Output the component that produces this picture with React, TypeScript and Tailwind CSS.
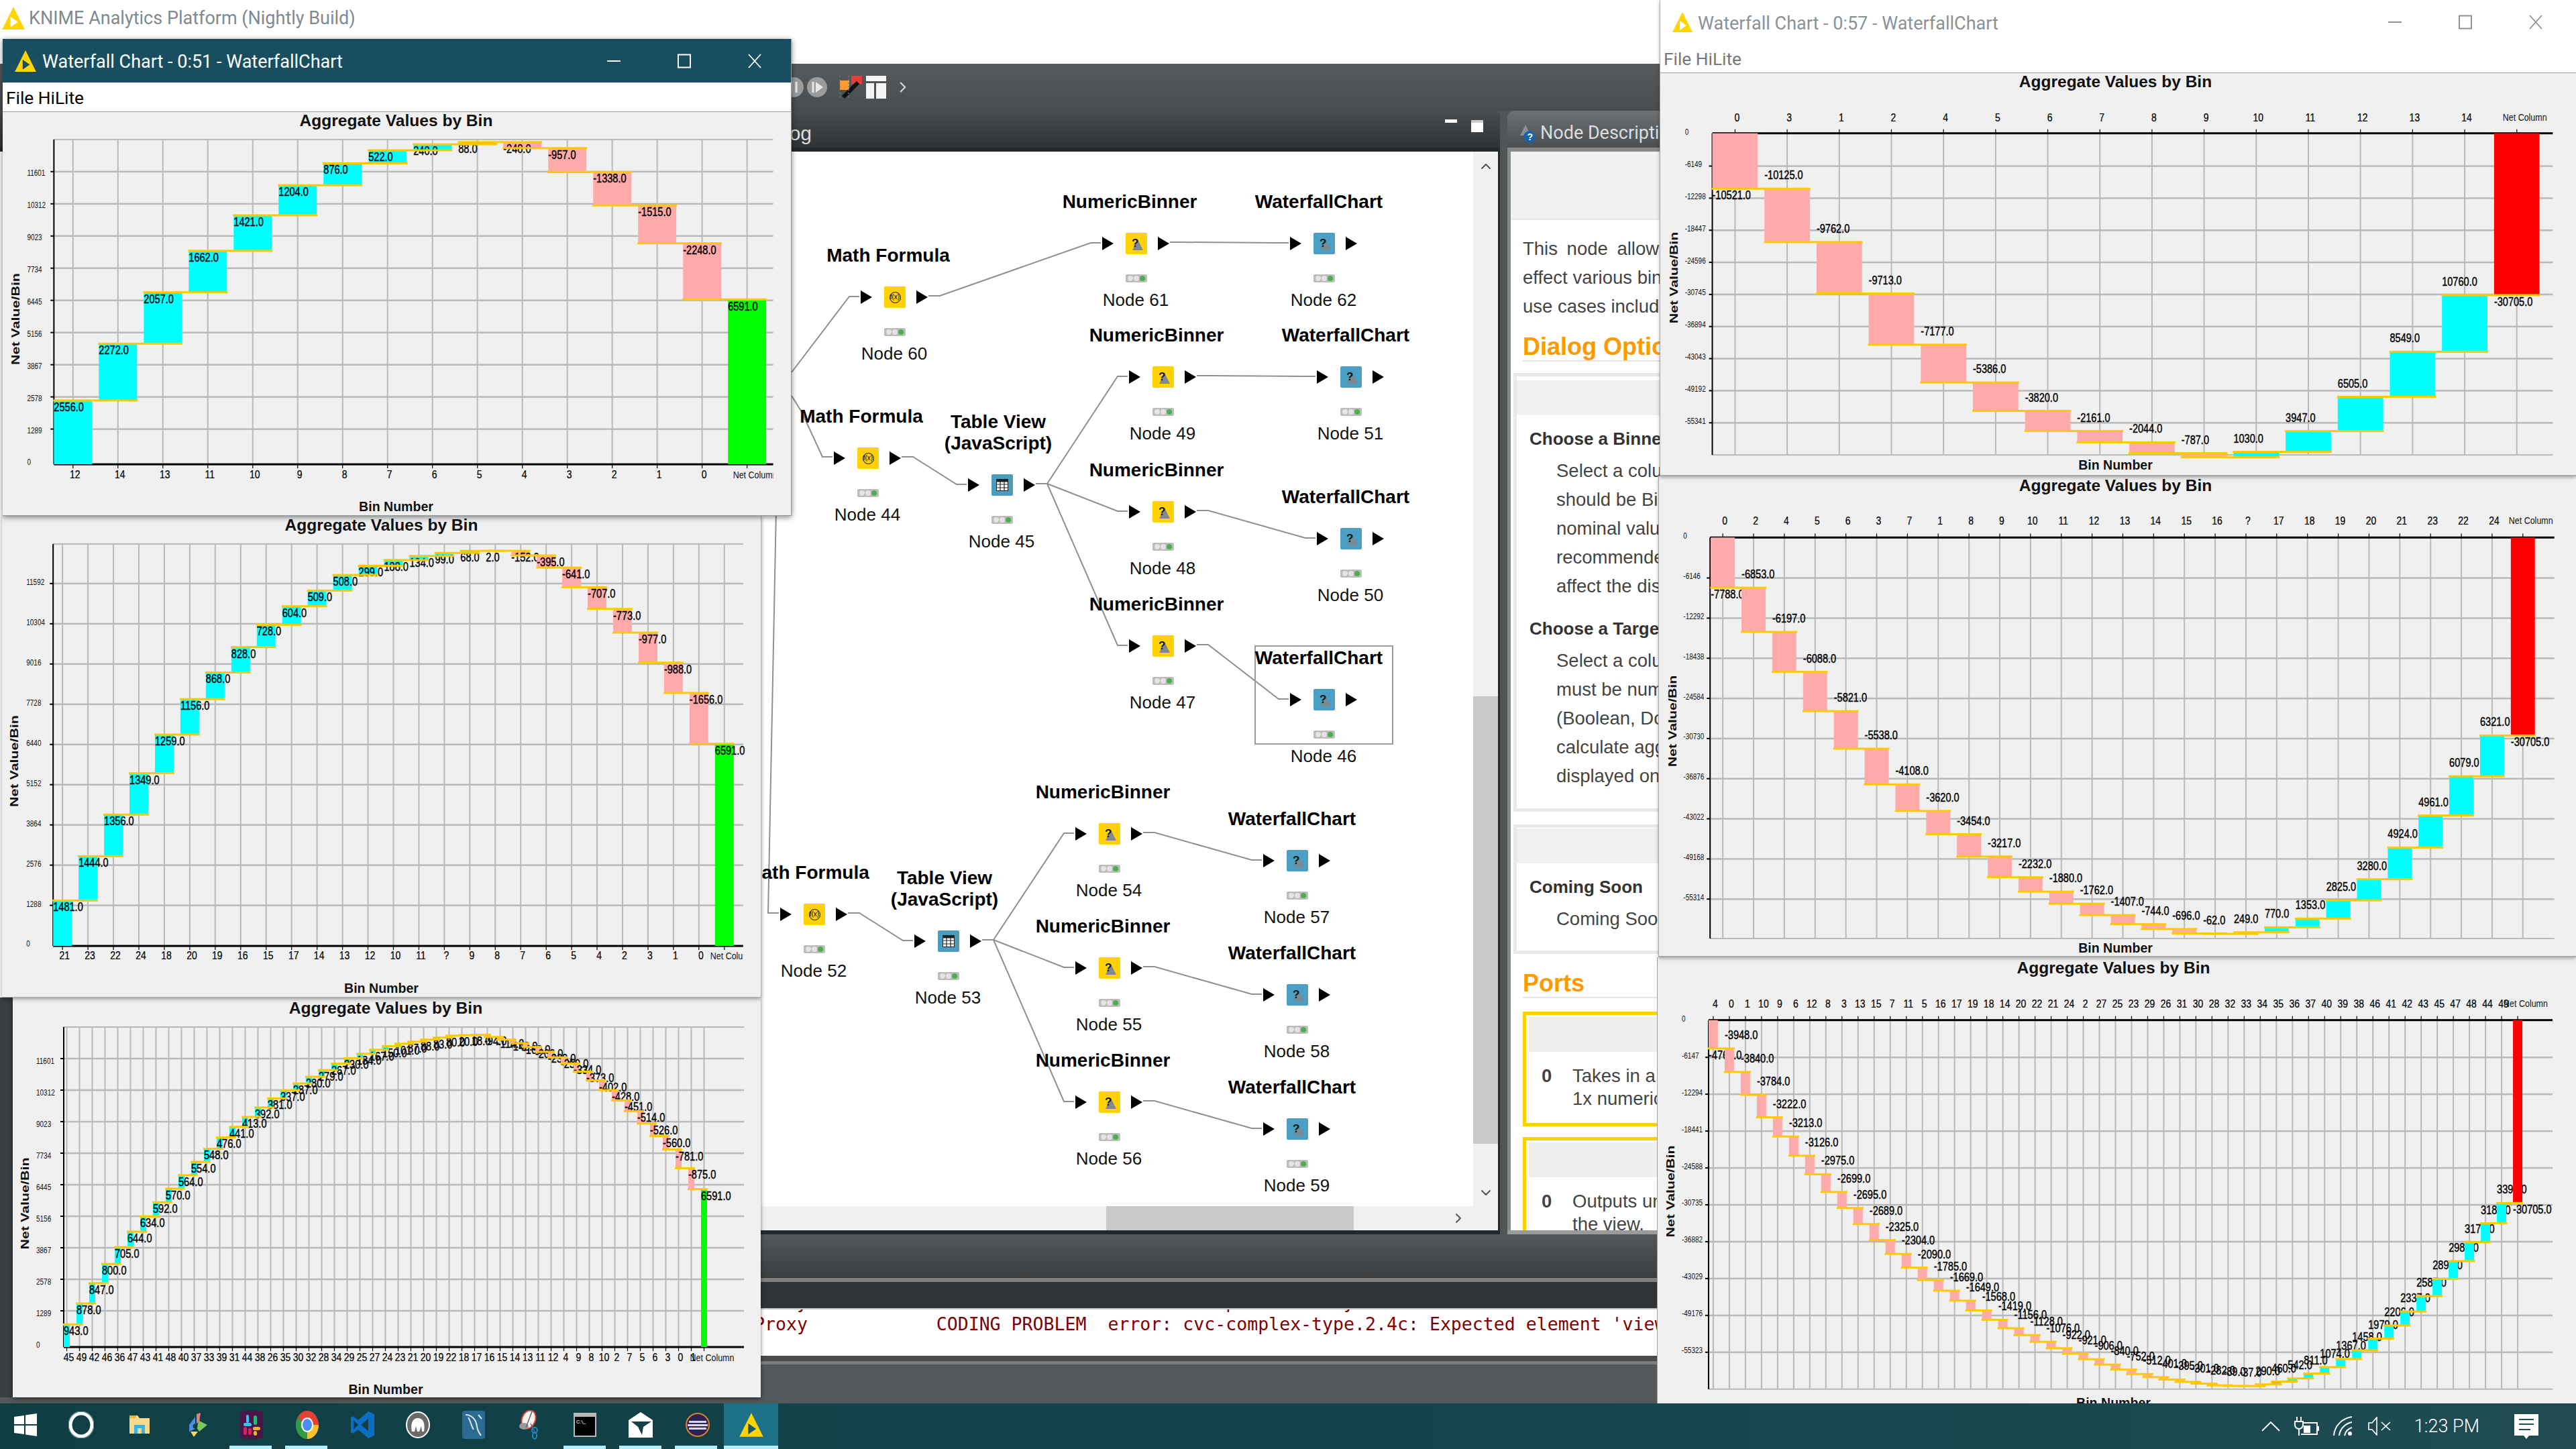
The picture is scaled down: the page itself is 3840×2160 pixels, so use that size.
import React from "react";
import { ChevronUp, ChevronDown, ChevronRight } from "lucide-react";

const sans = "[font-family:'Liberation_Sans',Arial,sans-serif]";

type ChartCfg = {
  id: string;
  vb: [number, number, number, number];
  names: string[];
  vals: number[];
  net: number;
  x0: number;
  step: number;
  barW: number;
  base: number;
  scale: number;
  plotL: number;
  plotR: number;
  plotT: number;
  plotB: number;
  ticks: number[];
  tickText: string[];
  tickX: number;
  tickDy: number;
  zeroY: number;
  xLabelY: number;
  titleX: number;
  titleY: number;
  binY: number;
  axisX: number;
  axisY: number;
  inverted?: boolean;
};

const range = (a: number, s: number, n: number) => Array.from({ length: n }, (_, i) => a + s * i);

const grid = "#b9b9b9";

function Chart({ c }: { c: ChartCfg }) {
  let total = 0;
  const cols = c.vals.map((v, i) => {
    const from = total;
    total += v;
    const y0 = c.base - from * c.scale;
    const y1 = c.base - total * c.scale;
    return { i, v, y0, y1, top: Math.min(y0, y1), h: Math.abs(y1 - y0), x: c.x0 + i * c.step };
  });
  const n = c.vals.length;
  const netX = c.x0 + n * c.step;
  const netY = c.base - c.net * c.scale;
  const centers = range(c.x0 + c.barW / 2, c.step, n + 1);
  const fmt = (v: number) => v.toFixed(1);
  return (
    <svg className="block w-full h-full" viewBox={c.vb.join(" ")}>
      <defs>
        <clipPath id={c.id}>
          <rect x={c.vb[0]} y={c.vb[1]} width={c.plotR - c.vb[0]} height={c.vb[3]} />
        </clipPath>
      </defs>
      <text x={c.titleX} y={c.titleY + 8} textAnchor="middle" fontSize="24.6" fontWeight="700" fill="#111">
        Aggregate Values by Bin
      </text>
      <text x={c.titleX} y={c.binY + 7} textAnchor="middle" fontSize="19.6" fontWeight="700" fill="#111">
        Bin Number
      </text>
      <text
        transform={`translate(${c.axisX + 6},${c.axisY}) scale(1,1.3) rotate(-90)`}
        textAnchor="middle"
        fontSize="16.5"
        fontWeight="700"
        fill="#111"
      >
        Net Value/Bin
      </text>
      {c.ticks.map((y) => (
        <rect key={y} x={c.plotL} y={y - 1.2} width={c.plotR - c.plotL} height="2.5" fill={grid} />
      ))}
      <rect x={c.plotL} y={(c.inverted ? c.plotB : c.plotT) - 1} width={c.plotR - c.plotL} height="2" fill={grid} />
      {centers.map((x) => (
        <rect key={x} x={x - 1} y={c.plotT} width="2" height={c.plotB - c.plotT} fill={grid} />
      ))}
      <rect x={c.plotL - 1} y={c.plotT} width="2" height={c.plotB - c.plotT} fill="#000" />
      <rect x={c.plotL} y={c.base - 1.5} width={c.plotR - c.plotL} height="3" fill="#000" />
      {centers.map((x) => (
        <rect key={x} x={x - 0.6} y={c.inverted ? c.base - 6 : c.base} width="1.2" height="6" fill="#000" />
      ))}
      {c.ticks.map((y) => (
        <rect key={y} x={c.plotL - 5} y={y - 1} width="5" height="2" fill="#000" />
      ))}
      {c.tickText.map((t, i) => (
        <text
          key={t}
          transform={`translate(${c.tickX},${c.ticks[i] + c.tickDy + 4.5}) scale(1,1.2)`}
          fontSize="10"
          fill="#111"
        >
          {t}
        </text>
      ))}
      <text transform={`translate(${c.tickX},${c.zeroY + 4.5}) scale(1,1.2)`} fontSize="10" fill="#111">
        0
      </text>
      <g clipPath={`url(#${c.id})`}>
        {c.names.map((t, i) => (
          <text
            key={i}
            transform={`translate(${centers[i] + 3},${c.xLabelY + 6}) scale(1,1.2)`}
            textAnchor="middle"
            fontSize="14"
            fill="#000"
            stroke="#000"
            strokeWidth="0.2"
          >
            {t}
          </text>
        ))}
        <text transform={`translate(${centers[n] - 21},${c.xLabelY + 5.5}) scale(1,1.2)`} fontSize="12.5" fill="#111">
          Net Column
        </text>
      </g>
      {cols.map((b) => {
        const labelY = c.inverted ? (b.i === 0 ? b.top + b.h + 10 : b.top - 20) : b.top + 10;
        return (
          <g key={b.i}>
            <rect x={b.x} y={b.top} width={c.barW} height={b.h} fill={b.v > 0 ? "#00ffff" : "#ffaaaa"} />
            <text
              transform={`translate(${b.x},${labelY + 6}) scale(1,1.2)`}
              fontSize="14.6"
              fill="#000"
              stroke="#000"
              strokeWidth="0.35"
            >
              {fmt(b.v)}
            </text>
          </g>
        );
      })}
      <rect
        x={netX}
        y={Math.min(netY, c.base)}
        width={c.barW}
        height={Math.abs(netY - c.base)}
        fill={c.net > 0 ? "#00ff00" : "#ff0000"}
      />
      <text
        transform={`translate(${netX},${netY + 16}) scale(1,1.2)`}
        fontSize="14.6"
        fill="#000"
        stroke="#000"
        strokeWidth="0.35"
      >
        {fmt(c.net)}
      </text>
      {cols.map((b) => (
        <rect key={b.i} x={b.x - 1} y={b.y1 - 1.5} width={c.step + c.barW + 2} height="3" fill="#ffc800" />
      ))}
    </svg>
  );
}

const lt = ["11601", "10312", "9023", "7734", "6445", "5156", "3867", "2578", "1289"];

const c1: ChartCfg = {
  id: "c1",
  vb: [4, 167, 1176, 602],
  names: ["12", "14", "13", "11", "10", "9", "8", "7", "6", "5", "4", "3", "2", "1", "0"],
  vals: [2556, 2272, 2057, 1662, 1421, 1204, 876, 522, 240, 88, -240, -957, -1338, -1515, -2248],
  net: 6591,
  x0: 80,
  step: 67.1,
  barW: 57,
  base: 693,
  scale: 0.0373,
  plotL: 80,
  plotR: 1154,
  plotT: 208,
  plotB: 693,
  ticks: range(256, 48.05, 9),
  tickText: lt,
  tickX: 40,
  tickDy: 2,
  zeroY: 689,
  xLabelY: 708,
  titleX: 591,
  titleY: 180,
  binY: 756,
  axisX: 23,
  axisY: 476,
};

const c2: ChartCfg = {
  id: "c2",
  vb: [3, 769, 1132, 718],
  names: "21 23 22 24 18 20 19 16 15 17 14 13 12 10 11 ? 9 8 7 6 5 4 2 3 1 0".split(" "),
  vals: [1481, 1444, 1356, 1349, 1259, 1156, 868, 828, 728, 604, 509, 508, 299, 188, 134, 99, 68, 2, -152, -395, -641, -707, -773, -977, -988, -1656],
  net: 6591,
  x0: 79,
  step: 38,
  barW: 28,
  base: 1411,
  scale: 0.0458,
  plotL: 79,
  plotR: 1109,
  plotT: 811,
  plotB: 1411,
  ticks: range(870, 60.05, 9),
  tickText: ["11592", "10304", "9016", "7728", "6440", "5152", "3864", "2576", "1288"],
  tickX: 39,
  tickDy: -2,
  zeroY: 1407,
  xLabelY: 1425,
  titleX: 569,
  titleY: 783,
  binY: 1474,
  axisX: 21,
  axisY: 1135,
};

const c3: ChartCfg = {
  id: "c3",
  vb: [19, 1487, 1115, 596],
  names: "45 49 42 46 36 47 43 41 48 40 37 33 39 31 44 38 26 35 30 32 28 34 29 25 27 24 23 21 20 19 22 18 17 16 15 14 13 11 12 4 9 8 10 2 7 5 6 3 0 1".split(" "),
  vals: [943, 878, 847, 800, 705, 644, 634, 592, 570, 564, 554, 548, 476, 441, 413, 392, 381, 337, 287, 280, 279, 267, 230, 184, 167, 150, 101, 87, 88, 83, 80, 20, 18, -94, -114, -142, -160, -206, -230, -259, -334, -373, -402, -428, -451, -514, -526, -560, -781, -875],
  net: 6591,
  x0: 95,
  step: 19,
  barW: 9,
  base: 2008,
  scale: 0.0357,
  plotL: 95,
  plotR: 1109,
  plotT: 1531,
  plotB: 2008,
  ticks: range(1578, 47, 9),
  tickText: lt,
  tickX: 54,
  tickDy: 3,
  zeroY: 2004,
  xLabelY: 2023,
  titleX: 575,
  titleY: 1503,
  binY: 2071,
  axisX: 37,
  axisY: 1794,
};

const r1: ChartCfg = {
  id: "r1",
  vb: [2474, 109, 1366, 601],
  names: "0 3 1 2 4 5 6 7 8 9 10 11 12 13 14".split(" "),
  vals: [-10521, -10125, -9762, -9713, -7177, -5386, -3820, -2161, -2044, -787, 1030, 3947, 6505, 8549, 10760],
  net: -30705,
  x0: 2550,
  step: 77.95,
  barW: 68,
  base: 199,
  scale: 0.00788,
  plotL: 2550,
  plotR: 3807,
  plotT: 199,
  plotB: 680,
  ticks: range(248, 48, 9),
  tickText: ["-6149", "-12298", "-18447", "-24596", "-30745", "-36894", "-43043", "-49192", "-55341"],
  tickX: 2509,
  tickDy: -3,
  zeroY: 197,
  xLabelY: 175,
  titleX: 3153,
  titleY: 122,
  binY: 695,
  axisX: 2492,
  axisY: 415,
  inverted: true,
};

const r2: ChartCfg = {
  id: "r2",
  vb: [2472, 710, 1368, 717],
  names: "0 2 4 5 6 3 7 1 8 9 10 11 12 13 14 15 16 ? 17 18 19 20 21 23 22 24".split(" "),
  vals: [-7788, -6853, -6197, -6088, -5821, -5538, -4108, -3620, -3454, -3217, -2232, -1880, -1762, -1407, -744, -696, -62, 249, 770, 1353, 2825, 3280, 4924, 4961, 6079, 6321],
  net: -30705,
  x0: 2548,
  step: 46,
  barW: 36,
  base: 801.5,
  scale: 0.00964,
  plotL: 2547,
  plotR: 3809,
  plotT: 801.5,
  plotB: 1401,
  ticks: range(862, 60, 9),
  tickText: ["-6146", "-12292", "-18438", "-24584", "-30730", "-36876", "-43022", "-49168", "-55314"],
  tickX: 2507,
  tickDy: -3,
  zeroY: 798.5,
  xLabelY: 776,
  titleX: 3153,
  titleY: 724,
  binY: 1415,
  axisX: 2491,
  axisY: 1076,
  inverted: true,
};

const r3: ChartCfg = {
  id: "r3",
  vb: [2470, 1427, 1370, 665],
  names: "4 0 1 10 9 6 12 8 3 13 15 7 11 5 16 17 19 18 14 20 22 21 24 2 27 25 23 29 26 31 30 28 32 33 34 35 36 37 40 39 38 46 41 42 43 45 47 48 44 49".split(" "),
  vals: [-4761, -3948, -3840, -3784, -3222, -3213, -3126, -2975, -2699, -2695, -2689, -2325, -2304, -2090, -1785, -1669, -1649, -1568, -1419, -1156, -1128, -1076, -922, -921, -906, -840, -752, -512, -401, -395, -301, -282, -89, -37, 290, 460, 542, 811, 1074, 1367, 1458, 1979, 2206, 2337, 2587, 2893, 2987, 3175, 3186, 3397],
  net: -30705,
  x0: 2546,
  step: 24,
  barW: 14,
  base: 1520.5,
  scale: 0.00888,
  plotL: 2546,
  plotR: 3805,
  plotT: 1520.5,
  plotB: 2071,
  ticks: range(1576, 55, 9),
  tickText: ["-6147", "-12294", "-18441", "-24588", "-30735", "-36882", "-43029", "-49176", "-55323"],
  tickX: 2506,
  tickDy: -3,
  zeroY: 1518,
  xLabelY: 1495.5,
  titleX: 3150,
  titleY: 1443,
  binY: 2091,
  axisX: 2489,
  axisY: 1776,
  inverted: true,
};

function KnimeLogo({ size, inner }: { size: number; inner: string }) {
  return (
    <svg width={size} height={size} viewBox="0 0 32 30">
      <polygon points="16,0 31,30 1,30" fill="#ffd500" />
      <polygon points="12,13 22,20 12,27" fill={inner} />
    </svg>
  );
}

function WinButtons({ stroke }: { stroke: string }) {
  return (
    <div className="ml-auto flex items-center">
      <div className="w-[105px] flex justify-center">
        <svg width="22" height="22" viewBox="0 0 22 22">
          <path d="M1 11H21" stroke={stroke} strokeWidth="2" />
        </svg>
      </div>
      <div className="w-[105px] flex justify-center">
        <svg width="22" height="22" viewBox="0 0 22 22">
          <rect x="2" y="1.5" width="18" height="19" fill="none" stroke={stroke} strokeWidth="2" />
        </svg>
      </div>
      <div className="w-[105px] flex justify-center">
        <svg width="22" height="22" viewBox="0 0 22 22">
          <path d="M2 1L20 21M20 1L2 21" stroke={stroke} strokeWidth="1.8" />
        </svg>
      </div>
    </div>
  );
}

function Tri() {
  return (
    <svg width="17" height="20" viewBox="0 0 17 20" className="block">
      <polygon points="0,0 17,10 0,20" fill="#000" />
    </svg>
  );
}

function NodeIcon({ kind }: { kind: string }) {
  if (kind === "m")
    return (
      <div className="w-8 h-8 bg-[#ffd200] rounded-[2px] flex items-center justify-center">
        <div className="w-[17px] h-[17px] rounded-full border border-black flex items-center justify-center text-[10px] leading-none text-black">
          f(x)
        </div>
      </div>
    );
  if (kind === "t")
    return (
      <div className="w-8 h-8 bg-[#4a9cbd] rounded-[2px] flex items-center justify-center">
        <svg width="18" height="18" viewBox="0 0 18 18">
          <rect x="0.5" y="0.5" width="17" height="17" fill="#fff" stroke="#222" />
          <rect x="0.5" y="0.5" width="17" height="4" fill="#222" />
          <path d="M6 1V18M12 1V18M0 8H18M0 13H18" stroke="#222" strokeWidth="1.2" />
        </svg>
      </div>
    );
  return (
    <div className={"w-8 h-8 rounded-[2px] " + (kind === "y" ? "bg-[#ffd200]" : "bg-[#4a9fc2]")}>
      <svg width="32" height="32" viewBox="0 0 32 32">
        <polygon points="18,10 26,26 10,26" fill="#7c8a93" />
        <text x="9" y="21" fontSize="17" fontWeight="700" fill="#111">
          ?
        </text>
      </svg>
    </div>
  );
}

type WNode = { n: number; x: number; y: number; label: string[]; kind: string };

const nodes: WNode[] = [
  { n: 60, x: 1318, y: 427, label: ["Math Formula"], kind: "m" },
  { n: 61, x: 1678, y: 347, label: ["NumericBinner"], kind: "y" },
  { n: 62, x: 1958, y: 347, label: ["WaterfallChart"], kind: "b" },
  { n: 44, x: 1278, y: 667, label: ["Math Formula"], kind: "m" },
  { n: 45, x: 1478, y: 707, label: ["Table View", "(JavaScript)"], kind: "t" },
  { n: 49, x: 1718, y: 546, label: ["NumericBinner"], kind: "y" },
  { n: 51, x: 1998, y: 546, label: ["WaterfallChart"], kind: "b" },
  { n: 48, x: 1718, y: 747, label: ["NumericBinner"], kind: "y" },
  { n: 50, x: 1998, y: 787, label: ["WaterfallChart"], kind: "b" },
  { n: 47, x: 1718, y: 947, label: ["NumericBinner"], kind: "y" },
  { n: 46, x: 1958, y: 1027, label: ["WaterfallChart"], kind: "b" },
  { n: 52, x: 1198, y: 1347, label: ["Math Formula"], kind: "m" },
  { n: 53, x: 1398, y: 1387, label: ["Table View", "(JavaScript)"], kind: "t" },
  { n: 54, x: 1638, y: 1227, label: ["NumericBinner"], kind: "y" },
  { n: 57, x: 1918, y: 1267, label: ["WaterfallChart"], kind: "b" },
  { n: 55, x: 1638, y: 1427, label: ["NumericBinner"], kind: "y" },
  { n: 58, x: 1918, y: 1467, label: ["WaterfallChart"], kind: "b" },
  { n: 56, x: 1638, y: 1627, label: ["NumericBinner"], kind: "y" },
  { n: 59, x: 1918, y: 1667, label: ["WaterfallChart"], kind: "b" },
];

const edges: [number, number][] = [
  [60, 61], [61, 62], [44, 45], [45, 49], [45, 48], [45, 47], [49, 51], [48, 50], [47, 46],
  [52, 53], [53, 54], [53, 55], [53, 56], [54, 57], [55, 58], [56, 59],
];

const byId = Object.fromEntries(nodes.map((n) => [n.n, n]));

function FlowNode({ d }: { d: WNode }) {
  const two = d.label.length > 1;
  const shift = d.kind === "m" || d.kind === "y" ? "-translate-x-[10px]" : d.kind === "t" ? "-translate-x-[6px]" : "-translate-x-[8px]";
  return (
    <div
      className="absolute w-[240px] flex flex-col items-center"
      style={{ left: d.x + 16 - 120, top: d.y - (two ? 94 : 62) - 226 }}
    >
      <div className={"whitespace-nowrap text-center text-[28px] leading-[32px] font-bold text-black " + shift}>
        {d.label.map((l) => (
          <div key={l}>{l}</div>
        ))}
      </div>
      <div className="mt-[30px] w-full grid grid-cols-[1fr_32px_1fr] items-center h-8">
        <div className="flex justify-end pr-[18px]">
          <Tri />
        </div>
        <NodeIcon kind={d.kind} />
        <div className="flex justify-start pl-[16px]">
          <Tri />
        </div>
      </div>
      <div className="mt-[30px] w-8 h-3 rounded-[2px] bg-[#bdbdbd] flex items-center justify-around px-[2px]">
        <span className="w-2 h-2 rounded-full bg-[#e4e4e4]" />
        <span className="w-2 h-2 rounded-full bg-[#e4e4e4]" />
        <span className="w-2 h-2 rounded-full bg-[#4caf50]" />
      </div>
      <div className="mt-[10px] -translate-x-[1px] text-[26px] leading-[32px] text-[#111] whitespace-nowrap">
        Node {d.n}
      </div>
    </div>
  );
}

function Canvas() {
  return (
    <div className="relative w-[2196px] h-full bg-white overflow-hidden">
      <svg className="absolute left-0 top-0" width="2196" height="1572" viewBox="0 226 2196 1572">
        {edges.map(([a, b]) => {
          const A = byId[a];
          const B = byId[b];
          const y1 = A.y + 14;
          const y2 = B.y + 15;
          const pts = `${A.x + 66},${y1} ${A.x + 83},${y1} ${B.x - 52},${y2} ${B.x - 37},${y2}`;
          return <polyline key={a + "-" + b} points={pts} fill="none" stroke="#8f8f8f" strokeWidth="2" />;
        })}
        <polyline points="1180,555 1266,442 1281,442" fill="none" stroke="#8f8f8f" strokeWidth="2" />
        <polyline points="1180,590 1195,614 1226,681 1241,681" fill="none" stroke="#8f8f8f" strokeWidth="2" />
        <polyline points="1157,760 1145,1361 1161,1361" fill="none" stroke="#8f8f8f" strokeWidth="2" />
      </svg>
      <div className="absolute left-[1870px] top-[736px] w-[207px] h-[148px] border-2 border-[#9a9a9a]" />
      {nodes.map((d) => (
        <FlowNode key={d.n} d={d} />
      ))}
    </div>
  );
}

function Editor() {
  return (
    <div className="w-[2236px] h-full flex flex-col">
      <div className="h-[55px] bg-linear-to-b from-[#4a4d4f] to-[#303335] rounded-t-[8px] flex items-center pt-[12px] relative">
        <span className="ml-[1160px] text-[30px] text-[#dcdcdc]">Log</span>
        <div className="absolute left-[2154px] top-[13px] w-[18px] h-[5px] bg-white" />
        <div className="absolute left-[2193px] top-[14px] w-[18px] h-[18px] bg-white border-t-[4px] border-[#ccc]" />
      </div>
      <div className="h-[6px] bg-[#26292b]" />
      <div className="flex-1 flex flex-col min-h-0">
        <div className="flex-1 flex min-h-0">
          <Canvas />
          <div className="w-[37px] bg-[#f1f1f1] flex flex-col">
            <div className="h-[812px] flex justify-center pt-[10px]">
              <ChevronUp size={24} color="#555" />
            </div>
            <div className="h-[667px] bg-[#c9c9c9]" />
            <div className="flex-1 flex items-end justify-center pb-[8px]">
              <ChevronDown size={24} color="#555" />
            </div>
          </div>
          <div className="w-[3px] bg-[#26292b]" />
        </div>
        <div className="h-[36px] bg-[#f1f1f1] flex">
          <div className="w-[1649px]" />
          <div className="w-[369px] bg-[#c9c9c9]" />
          <div className="flex-1 flex items-center pl-[144px]">
            <ChevronRight size={24} color="#555" />
          </div>
          <div className="w-[3px] bg-[#26292b]" />
        </div>
      </div>
      <div className="h-[6px] bg-[#26292b]" />
    </div>
  );
}

function Lines({ items }: { items: string[] }) {
  return (
    <div className="mt-[4px] pl-[40px] text-[27.5px] leading-[43px] text-[#444] whitespace-nowrap">
      {items.map((t) => (
        <div key={t}>{t}</div>
      ))}
    </div>
  );
}

function Heading({ children }: { children: React.ReactNode }) {
  return <div className="text-[26px] leading-[43px] font-bold text-[#333] whitespace-nowrap">{children}</div>;
}

function Section({ children, h }: { children: React.ReactNode; h: string }) {
  return (
    <div className={"ml-[4px] border-l-[5px] border-y-[5px] border-[#e9e9e9] overflow-hidden " + h}>
      <div className="h-[52px] bg-[#f0f0f0]" />
      <div className="pl-[19px]">{children}</div>
    </div>
  );
}

function Port({ h, mt, a, b }: { h: string; mt: string; a: string; b: string }) {
  return (
    <div className={"ml-[18px] border-l-[5px] border-y-[5px] border-[#ffd000] pl-[4px] pt-[3px] whitespace-nowrap " + h + " " + mt}>
      <div className="h-[52px] bg-[#efefef]" />
      <div className="mt-[19px] pl-[19px] grid grid-cols-[46px_1fr] text-[27.5px] leading-[34px] text-[#444]">
        <div className="font-bold">0</div>
        <div>
          <div>{a}</div>
          <div>{b}</div>
        </div>
      </div>
    </div>
  );
}

function Description() {
  return (
    <div className="flex-1 h-full flex flex-col min-w-0">
      <div className="h-[55px] bg-linear-to-b from-[#6e7173] to-[#4b4e50] rounded-t-[10px] flex items-center pl-[18px] pt-[12px] gap-[5px]">
        <svg width="26" height="30" viewBox="0 0 26 30">
          <polygon points="9,2 17,18 1,18" fill="#8d9093" />
          <circle cx="15" cy="20" r="9" fill="#1565a8" />
          <text x="11.5" y="25" fontSize="14" fontWeight="700" fill="#fff">
            ?
          </text>
        </svg>
        <span className="text-[27px] text-[#dddddd] whitespace-nowrap [font-family:Roboto,sans-serif]">Node Description</span>
      </div>
      <div className="h-[6px] bg-[#888]" />
      <div className="flex-1 flex min-h-0">
        <div className="w-[5px] bg-[#888]" />
        <div className="flex-1 bg-white overflow-hidden">
          <div className="h-[102px] bg-[#f1f1f1] border-b-2 border-[#e8e8e8]" />
          <div className="pl-[18px] pt-[21px] text-[27.5px] leading-[43px] text-[#444] whitespace-nowrap">
            <div className="[word-spacing:6px]">This node allows</div>
            <div>effect various bins</div>
            <div>use cases include</div>
          </div>
          <div className="ml-[18px] mt-[17px] h-[44px] text-[36px] leading-[44px] font-bold text-[#ff9900] border-b-2 border-[#e5e5e5] whitespace-nowrap">
            Dialog Options
          </div>
          <div className="mt-[17px]">
            <Section h="h-[654px] pt-[6px]">
              <div className="mt-[14px]">
                <Heading>Choose a Binned</Heading>
              </div>
              <Lines items={["Select a column", "should be Binned", "nominal values", "recommended", "affect the display"]} />
              <div className="mt-[21px]">
                <Heading>Choose a Target</Heading>
              </div>
              <Lines items={["Select a colum", "must be numeric", "(Boolean, Double", "calculate aggregate", "displayed on"]} />
            </Section>
          </div>
          <div className="mt-[19px]">
            <Section h="h-[193px] pt-[1px]">
              <div className="mt-[14px]">
                <Heading>Coming Soon</Heading>
              </div>
              <Lines items={["Coming Soon"]} />
            </Section>
          </div>
          <div className="ml-[18px] mt-[22px] h-[44px] text-[36px] leading-[44px] font-bold text-[#ff9900] border-b-2 border-[#e5e5e5]">
            Ports
          </div>
          <Port h="h-[171px]" mt="mt-[20px]" a="Takes in a" b="1x numeric" />
          <Port h="h-[171px]" mt="mt-[16px]" a="Outputs until" b="the view." />
        </div>
      </div>
      <div className="h-[6px] bg-[#9a9a9a]" />
    </div>
  );
}

function Toolbar() {
  return (
    <div className="h-[70px] bg-linear-to-b from-[#575b5e] to-[#484c4e] flex items-center pl-[1165px] gap-[14px]">
      <svg width="40" height="36" viewBox="0 0 40 36">
        <circle cx="18" cy="18" r="15" fill="#9a9c9e" />
        <path d="M14 10V26M22 10V26" stroke="#e8e8e8" strokeWidth="3" />
      </svg>
      <svg width="34" height="36" viewBox="0 0 34 36" className="-ml-[18px]">
        <circle cx="17" cy="18" r="15" fill="#9a9c9e" />
        <path d="M11 10V26" stroke="#e8e8e8" strokeWidth="3" />
        <polygon points="15,10 26,18 15,26" fill="#e8e8e8" />
      </svg>
      <svg width="38" height="36" viewBox="0 0 38 36" className="ml-[2px]">
        <rect x="1" y="8" width="14" height="14" fill="#ff9a2e" />
        <rect x="18" y="1" width="16" height="12" fill="#e83b3b" />
        <path d="M6 33L28 11" stroke="#111" strokeWidth="6" />
        <path d="M1 1V34M14 1V34" stroke="#777" strokeWidth="1.5" strokeDasharray="2 3" />
      </svg>
      <svg width="30" height="34" viewBox="0 0 30 34" className="-ml-[12px]">
        <path d="M0 0H30V8H0ZM0 11H12V34H0ZM15 11H30V34H15Z" fill="#f4f4f4" />
      </svg>
      <ChevronRight size={26} color="#d8d8d8" className="-ml-[2px]" />
    </div>
  );
}

function Console() {
  const prev = "    y".padEnd(44, " ") + "p" + " ".repeat(10) + "y";
  return (
    <div className="h-[71px] bg-white overflow-hidden pl-[1124px] [font-family:'DejaVu_Sans_Mono',monospace] text-[26.56px] leading-[33px] text-[#7f0000] whitespace-pre border-t-2 border-[#c8c8c8]">
      <div className="-mt-[28px]">{prev}</div>
      <div>Proxy            CODING PROBLEM  error: cvc-complex-type.2.4c: Expected element 'views' instead of</div>
    </div>
  );
}

const tbIcons: React.ReactNode[] = [
  <svg width="34" height="34" viewBox="0 0 34 34" key="w" className="-ml-[8px]">
    <path d="M0 5L15 3V16H0ZM17 2.6L34 0V16H17ZM0 18H15V31L0 29ZM17 18H34V34L17 31.4Z" fill="#fff" />
  </svg>,
  <svg width="38" height="40" viewBox="0 0 38 40" key="c" className="-ml-[8px]">
    <ellipse cx="19" cy="20" rx="16" ry="17" fill="none" stroke="#fff" strokeWidth="5" />
    <ellipse cx="19" cy="20" rx="19" ry="20" fill="none" stroke="#5e8f95" strokeWidth="1.5" />
  </svg>,
  <svg width="32" height="34" viewBox="0 0 32 34" key="f">
    <path d="M1 3H13L16 7H31V30H1Z" fill="#f8da8a" />
    <path d="M1 3H11V7H1Z" fill="#f3b92e" />
    <path d="M8 17H24V30H19V22H13V30H8Z" fill="#36b5ea" />
  </svg>,
  <svg width="36" height="36" viewBox="0 0 36 36" key="k">
    <polygon points="9,18 18,6 18,24 9,28" fill="#4d8fe8" />
    <polygon points="20,2 26,0 24,14 20,16" fill="#f07c78" />
    <polygon points="24,12 36,18 24,28 20,22" fill="#79c95b" />
    <polygon points="11,28 22,28 16,36" fill="#f8d95f" />
    <circle cx="18" cy="20" r="3.5" fill="#17393a" />
  </svg>,
  <svg width="36" height="42" viewBox="0 0 36 42" key="s" className="ml-[3px]">
    <rect x="1" y="0" width="34" height="42" rx="6" fill="#4a154b" />
    <rect x="10" y="6" width="4" height="12" rx="2" fill="#36c5f0" />
    <rect x="6" y="18" width="12" height="5" rx="2.5" fill="#36c5f0" />
    <rect x="21" y="7" width="5" height="14" rx="2.5" fill="#2eb67d" />
    <rect x="6" y="24" width="5" height="12" rx="2.5" fill="#e01e5a" />
    <rect x="13" y="26" width="5" height="10" rx="2.5" fill="#e01e5a" />
    <rect x="20" y="24" width="11" height="5" rx="2.5" fill="#ecb22e" />
    <rect x="21" y="30" width="5" height="7" rx="2.5" fill="#ecb22e" />
  </svg>,
  <svg width="36" height="42" viewBox="0 0 36 42" key="ch" className="ml-[3px]">
    <ellipse cx="18" cy="21" rx="17" ry="21" fill="#e34133" />
    <path d="M18 21H35C35 32 28 42 18 42Z" fill="#fbc02d" />
    <path d="M18 42C8 42 1 32 1 21C1 16 3 12 5 9L18 30Z" fill="#2e9b45" />
    <ellipse cx="18" cy="21" rx="9" ry="11" fill="#fff" />
    <ellipse cx="18" cy="21" rx="7" ry="9" fill="#4a8cf0" />
  </svg>,
  <svg width="36" height="42" viewBox="0 0 36 42" key="v" className="ml-[3px]">
    <path d="M26 1L35 5V37L26 41L11 28L3 34L0 32V10L3 8L11 14ZM26 12L15 21L26 30Z" fill="#0a6fc2" />
    <path d="M4 14L11 21L4 28Z" fill="#0e3a4c" />
  </svg>,
  <svg width="38" height="40" viewBox="0 0 38 40" key="e">
    <ellipse cx="19" cy="20" rx="17" ry="19" fill="#6a6a6a" stroke="#fff" strokeWidth="2" />
    <path d="M10 30C8 20 10 10 19 10C28 10 30 20 28 30L25 30L24 22L21 30L18 30L16 22L14 30Z" fill="#fff" />
  </svg>,
  <svg width="36" height="42" viewBox="0 0 36 42" key="m">
    <rect x="1" y="0" width="34" height="42" rx="4" fill="#2b6a92" />
    <path d="M6 6C14 6 22 12 23 24C24 30 27 34 29 37M10 10C14 16 14 22 18 28M25 6L30 12" fill="none" stroke="#d8e7f0" strokeWidth="2" />
  </svg>,
  <svg width="36" height="44" viewBox="0 0 36 44" key="sn">
    <ellipse cx="17" cy="14" rx="10" ry="14" fill="#f4f4f4" stroke="#e53935" strokeWidth="2" transform="rotate(20 17 14)" />
    <ellipse cx="10" cy="24" rx="7" ry="5" fill="#9a9a9a" />
    <path d="M22 2L13 26M20 20L27 34" stroke="#666" strokeWidth="1.5" />
    <circle cx="26" cy="30" r="4" fill="none" stroke="#1e88c7" strokeWidth="2" />
    <ellipse cx="26" cy="38" rx="3" ry="5" fill="none" stroke="#1e88c7" strokeWidth="2" />
  </svg>,
  <svg width="34" height="36" viewBox="0 0 34 36" key="cmd">
    <rect x="1" y="1" width="32" height="34" fill="#000" stroke="#b8b8b8" strokeWidth="2" />
    <rect x="1" y="1" width="32" height="5" fill="#b8b8b8" />
    <text x="4" y="16" fontSize="8" fill="#fff">
      C:\_
    </text>
  </svg>,
  <svg width="36" height="38" viewBox="0 0 36 38" key="em">
    <path d="M18 0L36 12V38H0V12Z" fill="#fff" />
    <path d="M4 14H34L22 22L20 34L14 22Z" fill="#15404a" />
  </svg>,
  <svg width="36" height="38" viewBox="0 0 36 38" key="ec" className="ml-[4px]">
    <circle cx="18" cy="19" r="17" fill="#2c2255" stroke="#d9822b" strokeWidth="2" />
    <path d="M5 13H31V16H5ZM3 18H33V21H3ZM5 23H31V26H5Z" fill="#d7d5e8" />
  </svg>,
];

function Taskbar() {
  const lines = [4, 5, 10, 11, 12];
  return (
    <div className="h-[68px] bg-linear-to-r from-[#0f3f43] via-[#14424c] to-[#1f4b51] flex text-white [font-family:Roboto,sans-serif]">
      {tbIcons.map((ic, i) => (
        <div key={i} className="w-[83px] h-full flex flex-col items-center">
          <div className="flex-1 flex items-center justify-center">{ic}</div>
          <div className={"h-[5px] w-[63px] " + (lines.includes(i) ? "bg-[#b3ecfb]" : "")} />
        </div>
      ))}
      <div className="w-[81px] bg-[#1c7188] flex flex-col items-center">
        <div className="flex-1 flex items-center justify-center">
          <KnimeLogo size={38} inner="#19596b" />
        </div>
        <div className="h-[5px] w-full bg-[#b3ecfb]" />
      </div>
      <div className="ml-auto flex items-center">
        <svg width="30" height="18" viewBox="0 0 30 18" fill="none" stroke="#fff" strokeWidth="1.8">
          <path d="M2 16L15 3L28 16" />
        </svg>
        <svg className="ml-[20px]" width="38" height="30" viewBox="0 0 38 30" fill="none" stroke="#fff" strokeWidth="2">
          <path d="M4 1V8M10 1V8M1 8H13V13A6 6 0 0 1 1 13ZM7 19V29" />
          <path d="M12 10H34V27H10" />
          <path d="M36 15V22" />
          <rect x="14" y="14" width="10" height="11" fill="#fff" stroke="none" />
        </svg>
        <svg className="ml-[20px]" width="32" height="30" viewBox="0 0 32 30" fill="none" stroke="#fff" strokeWidth="2">
          <path d="M1 29C2 14 14 3 28 1M9 29C10 19 18 11 28 9M17 29C18 24 22 19 28 17" />
          <circle cx="25" cy="26" r="3" fill="#fff" stroke="none" />
        </svg>
        <svg className="ml-[20px]" width="36" height="28" viewBox="0 0 36 28" fill="none" stroke="#fff" strokeWidth="1.6">
          <path d="M1 9H6L13 1V27L6 19H1Z" />
          <path d="M20 8L33 20M33 8L20 20" />
        </svg>
        <span className="ml-[33px] text-[27px] leading-none whitespace-nowrap font-light">1:23 PM</span>
        <svg className="ml-[52px] mr-[56px]" width="36" height="37" viewBox="0 0 36 37">
          <path d="M0 0H36V32H22L18 37L14 32H0Z" fill="#fff" />
          <path d="M7 8H29M7 15H29M7 23H24" stroke="#1f4b51" strokeWidth="2" />
        </svg>
      </div>
    </div>
  );
}

export default function App() {
  return (
    <div className={"relative w-[3840px] h-[2160px] overflow-hidden bg-[#505558] flex flex-col " + sans}>
      <div className="h-[95px] bg-white flex items-center pl-[2px] gap-[5px] pb-[41px]">
        <KnimeLogo size={36} inner="#ffffff" />
        <span className="text-[27px] text-[#7f8a90] whitespace-nowrap [font-family:Roboto,sans-serif]">
          KNIME Analytics Platform (Nightly Build)
        </span>
      </div>
      <Toolbar />
      <div className="h-[1675px] flex">
        <Editor />
        <div className="w-[11px]" />
        <Description />
      </div>
      <div className="h-[65px] bg-linear-to-b from-[#53585b] to-[#3c3e40] border-b border-[#333]" />
      <div className="h-[6px] bg-[#7d7f80]" />
      <div className="h-[39px] bg-[#303437]" />
      <Console />
      <div className="h-[8px] bg-[#4a4a4a]" />
      <div className="h-[5px] bg-[#7a7c7d]" />
      <div className="h-[58px] bg-[#53585b]" />
      <Taskbar />

      <div className="absolute left-0 top-[1487px] w-[19px] h-[596px] bg-[#3a3e41]" />

      <div className="absolute left-[19px] top-[1487px] w-[1115px] h-[596px] bg-[#f0f0f0] shadow-[0_2px_6px_rgba(0,0,0,0.5)]">
        <Chart c={c3} />
      </div>
      <div className="absolute left-[3px] top-[769px] w-[1132px] h-[718px] bg-[#f0f0f0] border-r border-b border-[#b0b0b0] shadow-[0_2px_6px_rgba(0,0,0,0.4)]">
        <Chart c={c2} />
      </div>
      <div className="absolute left-[4px] top-[58px] w-[1176px] h-[711px] flex flex-col bg-[#f0f0f0] border-r border-b border-[#8a9aa0] shadow-[0_2px_8px_rgba(0,0,0,0.5)]">
        <div className="h-[65px] bg-[#184e5f] flex items-center pl-[17px] pr-[2px] gap-[8px] text-white [font-family:Roboto,sans-serif]">
          <KnimeLogo size={34} inner="#184e5f" />
          <span className="text-[27px] whitespace-nowrap mt-[4px]">Waterfall Chart - 0:51 - WaterfallChart</span>
          <WinButtons stroke="#ffffff" />
        </div>
        <div className="h-[44px] bg-white border-b border-[#a0a0a0] pl-[5px] pt-[4px] flex items-center text-[26.3px] text-black [font-family:Roboto,sans-serif]">
          File HiLite
        </div>
        <div className="flex-1 min-h-0">
          <Chart c={c1} />
        </div>
      </div>

      <div className="absolute left-[2470px] top-[1427px] w-[1370px] h-[665px] bg-[#f0f0f0] border-l border-[#a0a0a0]">
        <Chart c={r3} />
      </div>
      <div className="absolute left-[2472px] top-[710px] w-[1368px] h-[717px] bg-[#f0f0f0] border-l border-b-2 border-[#a8a8a8] shadow-[0_2px_5px_rgba(0,0,0,0.3)]">
        <Chart c={r2} />
      </div>
      <div className="absolute left-[2474px] top-0 w-[1366px] h-[710px] flex flex-col bg-[#f0f0f0] border-l border-b-2 border-[#a8a8a8] shadow-[0_2px_5px_rgba(0,0,0,0.3)]">
        <div className="h-[65px] bg-white flex items-center pl-[17px] pr-[8px] gap-[7px] text-[#8a9298] [font-family:Roboto,sans-serif]">
          <KnimeLogo size={32} inner="#ffffff" />
          <span className="text-[27px] whitespace-nowrap mt-[6px]">Waterfall Chart - 0:57 - WaterfallChart</span>
          <WinButtons stroke="#8a9298" />
        </div>
        <div className="h-[44px] bg-white border-b border-[#a0a0a0] pl-[5px] pt-[4px] flex items-center text-[26.3px] text-[#777] [font-family:Roboto,sans-serif]">
          File HiLite
        </div>
        <div className="flex-1 min-h-0">
          <Chart c={r1} />
        </div>
      </div>
    </div>
  );
}
